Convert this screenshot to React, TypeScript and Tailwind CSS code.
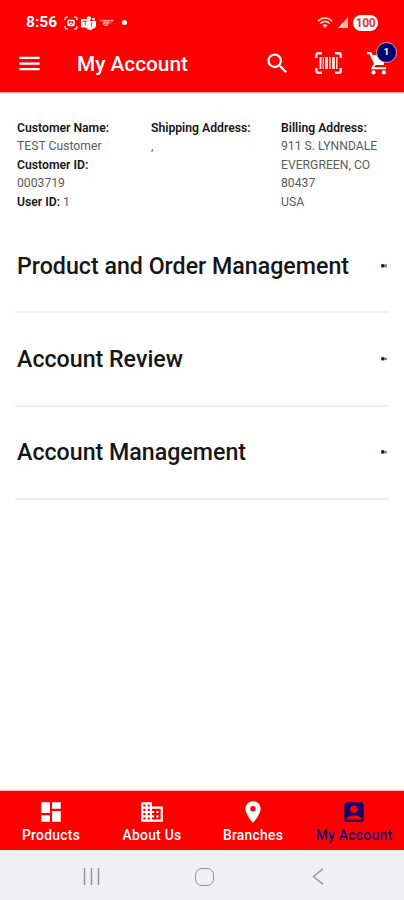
import React from 'react'
import { MdAccountBox, MdBusiness, MdDashboard, MdLocationOn, MdMenu, MdSearch } from 'react-icons/md'

const sections = [
  { title: 'Product and Order Management', arrow: 'M0 .3h6v3H0z' },
  { title: 'Account Review', arrow: 'M0 .3h3l3 .9v1.6l-3 .5H0z' },
  { title: 'Account Management', arrow: 'M0 .3h2l4 1.2v1.2L3 3.700H0z' },
]

const tabs = [
  { label: 'Products', icon: MdDashboard },
  { label: 'About Us', icon: MdBusiness },
  { label: 'Branches', icon: MdLocationOn },
  { label: 'My Account', icon: MdAccountBox, active: true },
]

function StatusBar() {
  return (
    <div className="flex h-[45px] items-center pl-[26px] pr-[26px] text-white">
      <span className="w-[38px] whitespace-nowrap text-[15.5px] font-bold leading-none">8:56</span>
      <svg className="h-[14px] w-[14px]" viewBox="0 0 14 14" fill="none" stroke="currentColor" strokeWidth="1.2">
        <path d="M1 4V3a2 2 0 0 1 2-2h1M10 1h1a2 2 0 0 1 2 2v1M13 10v1a2 2 0 0 1-2 2h-1M4 13H3a2 2 0 0 1-2-2v-1" />
        <rect x="4" y="4.500" width="6" height="5" rx="1" strokeWidth="1.500" />
        <path d="M4.500 9L7 7l2.500 2" />
      </svg>
      <svg className="ml-[3px] h-[14px] w-[15px]" viewBox="0 0 15 14" fill="currentColor">
        <circle cx="8" cy="2.3" r="2.1" />
        <circle cx="12.6" cy="3.2" r="1.4" />
        <path d="M6 5h9v4a3 3 0 0 1-3 3.4A4 4 0 0 1 5 11z" />
        <rect x="0" y="3" width="8.5" height="8.5" rx="1" />
        <path d="M2 5.2h4.5M4.2 5.2v4.4M10.6 6v5" stroke="#fe0000" strokeWidth="0.8" />
      </svg>
      <svg className="ml-[4px] h-[8px] w-[14px] opacity-80" viewBox="0 0 14 8" fill="none" stroke="currentColor">
        <path d="M0 1.3h13L10 4.6M2 3h8M3 4.8h6M4 6.4h4M6 1l-3 5M9 1L6 6" strokeWidth="0.8" />
      </svg>
      <span className="ml-[8px] h-[5px] w-[5px] rounded-full bg-white" />

      <svg className="ml-auto h-[12px] w-[16px]" viewBox="0 0 16 12" fill="none" stroke="#ffd6cf" strokeWidth="1.6">
        <path d="M1 4.2C5-.1 11-.1 15 4.2M3.3 6.5c3-2.8 6.4-2.8 9.4 0" />
        <path d="M5.5 8.2c1.7-1.3 3.3-1.3 5 0L8 11z" fill="#ffd6cf" stroke="none" />
      </svg>
      <svg className="ml-[5px] h-[11px] w-[10px]" viewBox="0 0 10 11">
        <path d="M0 11L10 0v11z" fill="#ffb3aa" />
        <path d="M0 11l5-5.5V11z" fill="#ffd9d5" />
      </svg>
      <span className="ml-[5px] flex h-[16px] w-[25px] items-center justify-center rounded-full bg-white text-[12px] font-bold leading-none tracking-[-0.4px] text-[#e03a3a]">
        100
      </span>
    </div>
  )
}

function BarcodeIcon() {
  return (
    <svg className="h-[22px] w-[27px]" viewBox="0 0 27 22" fill="none" stroke="#ffe6e2">
      <path d="M1.3 6V3A1.7 1.7 0 0 1 3 1.3h4M20 1.3h4A1.7 1.7 0 0 1 25.7 3v3M25.7 16v3a1.7 1.7 0 0 1-1.7 1.7h-4M7 20.7H3A1.7 1.7 0 0 1 1.3 19v-3" strokeWidth="2.4" />
      <path d="M5.5 5v12" strokeWidth="2" />
      <path d="M8.3 5v12" strokeWidth="1.2" />
      <path d="M11.5 5v12" strokeWidth="3" />
      <path d="M15 5v12" strokeWidth="1.5" />
      <path d="M18.5 5v12" strokeWidth="2.8" />
      <path d="M21.8 5v12" strokeWidth="1.4" />
    </svg>
  )
}

function CartIcon() {
  return (
    <svg className="h-[25px] w-[25px]" viewBox="0 0 25 25" fill="none" stroke="currentColor">
      <path d="M0 2.200h3.500L8.300 13" strokeWidth="2.200" />
      <path d="M4 4h16l-3.500 9H8z" fill="currentColor" stroke="none" />
      <path d="M8.300 12.500L5.500 17.300H19" strokeWidth="2" />
      <path d="M8 13h9" strokeWidth="2" />
      <circle cx="6.500" cy="21.400" r="2.100" fill="currentColor" stroke="none" />
      <circle cx="16.800" cy="21.400" r="2.100" fill="currentColor" stroke="none" />
    </svg>
  )
}

function AppBar() {
  return (
    <div className="flex h-[36px] items-center pl-[16px] pr-[12px] text-white">
      <MdMenu className="h-[27px] w-[27px]" />
      <h1 className="ml-[34px] mt-[3px] whitespace-nowrap text-[20.8px] font-medium leading-none">My Account</h1>
      <MdSearch className="ml-auto mr-[24px] h-[27px] w-[27px]" />
      <BarcodeIcon />
      <div className="relative ml-[25px]">
        <CartIcon />
        <span className="absolute -top-[9px] left-[9px] flex h-[21px] w-[21px] items-center justify-center rounded-full border border-[#d7a0c0] bg-[#00006c] text-[9.5px] font-bold leading-none">
          1
        </span>
      </div>
    </div>
  )
}

function CustomerInfo() {
  return (
    <div className="flex pl-[17px] pt-[27px] text-[12.2px] leading-[18.4px] text-[#5c5c5c]">
      <div className="w-[134px]">
        <p className="font-semibold text-[#161616]">Customer Name:</p>
        <p>TEST Customer</p>
        <p className="font-semibold text-[#161616]">Customer ID:</p>
        <p>0003719</p>
        <p><span className="font-semibold text-[#161616]">User ID:</span> 1</p>
      </div>
      <div className="w-[130px]">
        <p className="font-semibold text-[#161616]">Shipping Address:</p>
        <p>,</p>
      </div>
      <div className="whitespace-nowrap">
        <p className="font-semibold text-[#161616]">Billing Address:</p>
        <p>911 S. LYNNDALE</p>
        <p>EVERGREEN, CO</p>
        <p>80437</p>
        <p>USA</p>
      </div>
    </div>
  )
}

export default function App() {
  return (
    <div className="flex h-[900px] w-[404px] flex-col overflow-hidden bg-[#fefefe] font-['Roboto',sans-serif]">
      <header className="h-[92px] bg-[#fe0000] shadow-[0_1px_1px_rgba(254,0,0,0.35)]">
        <StatusBar />
        <AppBar />
      </header>

      <main className="flex-1">
        <CustomerInfo />
        <div className="mx-[15px] mt-[9px]">
          {sections.map(({ title, arrow }) => (
            <button key={title} type="button" className="flex h-[93.3px] w-full items-center justify-between border-b-2 border-[#f0f0f0] pl-[2px] pr-[2px] text-left">
              <span className="mt-[1px] whitespace-nowrap text-[23.2px] font-medium leading-none text-[#161616]">{title}</span>
              <svg className="h-[4px] w-[6px]" viewBox="0 0 6 4">
                <path d={arrow} fill="#77779a" />
                <path d="M.5 .3H3v3H.5z" fill="#15154f" />
              </svg>
            </button>
          ))}
        </div>
      </main>

      <nav className="grid h-[59px] grid-cols-4 bg-[#fe0000] shadow-[0_0_1px_1px_rgba(254,0,0,0.3)]">
        {tabs.map(({ label, icon: Icon, active }) => (
          <div key={label} className={`flex flex-col items-center pt-[8px] ${active ? 'text-[#16006a]' : 'text-white'}`}>
            <Icon className="h-[26px] w-[26px]" />
            <span className="mt-[2px] whitespace-nowrap pl-px text-[13.8px] font-medium leading-[16px] tracking-[0.3px]">{label}</span>
          </div>
        ))}
      </nav>

      <div className="flex h-[50px] items-center bg-[#f0f0f2] pl-[83px] text-[#929294]">
        <svg className="mt-[3px] h-[17px] w-[17px]" viewBox="0 0 17 17" stroke="currentColor" strokeWidth="1.5">
          <path d="M1.5 0v17M8.5 0v17M15.5 0v17" />
        </svg>
        <span className="ml-[95px] mt-[3px] h-[18px] w-[19px] rounded-[7px] border-[1.5px] border-current" />
        <svg className="ml-[98px] mt-[3px] h-[17px] w-[12px]" viewBox="0 0 12 17" fill="none" stroke="currentColor" strokeWidth="1.4">
          <path d="M11 .8L1.5 8.5 11 16.2" />
        </svg>
      </div>
    </div>
  )
}
